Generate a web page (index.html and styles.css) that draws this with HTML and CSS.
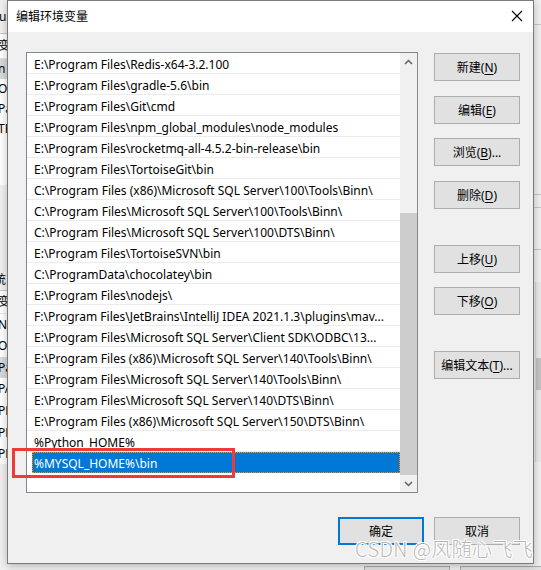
FILE: index.html
```html
<!DOCTYPE html>
<html lang="zh-CN">
  <head>
    <meta charset="utf-8"/>
    <title>编辑环境变量</title>
    <link rel="stylesheet" href="styles.css">
  </head>
  <body>
    <div class="desk">
      <div class="strip-left">
        <div class="ls-head">u</div>
        <div class="ls-list">
          <div class="ls-row ls-hd">变</div>
          <div class="ls-row ls-sel">n</div>
          <div class="ls-row">O</div>
          <div class="ls-row">Pa</div>
          <div class="ls-row">TE</div>
        </div>
        <div class="ls-gap">统</div>
        <div class="ls-list ls-list2">
          <div class="ls-row ls-hd">变</div>
          <div class="ls-row">N</div>
          <div class="ls-row">O</div>
          <div class="ls-row ls-sel">Pa</div>
          <div class="ls-row">PA</div>
          <div class="ls-row">PR</div>
          <div class="ls-row">PR</div>
          <div class="ls-row">PR</div>
        </div>
      </div>
      <div class="desk-mid"></div>
      <div class="strip-right">
        <div class="rs-line rs-a"></div>
        <div class="rs-line rs-b"></div>
        <div class="rs-line rs-c"></div>
        <div class="rs-line rs-d"></div>
        <div class="rs-scroll"><div class="rs-thumb"></div></div>
      </div>
      <div class="desk-bottom">
        <div class="desk-btn"></div>
        <div class="desk-btn desk-btn2"></div>
      </div>
    </div>

    <div class="dialog">
      <div class="titlebar">
        <span class="title">编辑环境变量</span>
        <svg class="close" width="12" height="12" viewBox="0 0 12 12">
          <path d="M1 1 L11 11 M11 1 L1 11" stroke="#000" stroke-width="1.1" fill="none"/>
        </svg>
      </div>
      <div class="body">
        <div class="main">
          <div class="listbox">
            <div class="rows">
              <div class="row"><span class="txt">E:\Program Files\Redis-x64-3.2.100</span></div>
              <div class="row"><span class="txt">E:\Program Files\gradle-5.6\bin</span></div>
              <div class="row"><span class="txt">E:\Program Files\Git\cmd</span></div>
              <div class="row"><span class="txt">E:\Program Files\npm_global_modules\node_modules</span></div>
              <div class="row"><span class="txt">E:\Program Files\rocketmq-all-4.5.2-bin-release\bin</span></div>
              <div class="row"><span class="txt">E:\Program Files\TortoiseGit\bin</span></div>
              <div class="row"><span class="txt">C:\Program Files (x86)\Microsoft SQL Server\100\Tools\Binn\</span></div>
              <div class="row"><span class="txt">C:\Program Files\Microsoft SQL Server\100\Tools\Binn\</span></div>
              <div class="row"><span class="txt">C:\Program Files\Microsoft SQL Server\100\DTS\Binn\</span></div>
              <div class="row"><span class="txt">E:\Program Files\TortoiseSVN\bin</span></div>
              <div class="row"><span class="txt">C:\ProgramData\chocolatey\bin</span></div>
              <div class="row"><span class="txt">E:\Program Files\nodejs\</span></div>
              <div class="row"><span class="txt">F:\Program Files\JetBrains\IntelliJ IDEA 2021.1.3\plugins\mav...</span></div>
              <div class="row"><span class="txt">E:\Program Files\Microsoft SQL Server\Client SDK\ODBC\13...</span></div>
              <div class="row"><span class="txt">E:\Program Files (x86)\Microsoft SQL Server\140\Tools\Binn\</span></div>
              <div class="row"><span class="txt">E:\Program Files\Microsoft SQL Server\140\Tools\Binn\</span></div>
              <div class="row"><span class="txt">E:\Program Files\Microsoft SQL Server\140\DTS\Binn\</span></div>
              <div class="row"><span class="txt">E:\Program Files (x86)\Microsoft SQL Server\150\DTS\Binn\</span></div>
              <div class="row"><span class="txt">%Python_HOME%</span></div>
              <div class="row selected"><span class="txt">%MYSQL_HOME%\bin</span></div>
            </div>
            <div class="scrollbar">
              <div class="sb-btn">
                <svg width="9" height="6" viewBox="0 0 9 6"><path d="M1 5 L4.5 1.5 L8 5" stroke="#606060" stroke-width="1.5" fill="none"/></svg>
              </div>
              <div class="sb-track"><div class="sb-thumb"></div></div>
              <div class="sb-btn">
                <svg width="9" height="6" viewBox="0 0 9 6"><path d="M1 1 L4.5 4.5 L8 1" stroke="#606060" stroke-width="1.5" fill="none"/></svg>
              </div>
            </div>
          </div>
          <div class="side">
            <button class="btn">新建(<u>N</u>)</button>
            <button class="btn nudge">编辑(<u>E</u>)</button>
            <button class="btn">浏览(<u>B</u>)...</button>
            <button class="btn nudge">删除(<u>D</u>)</button>
            <button class="btn gap">上移(<u>U</u>)</button>
            <button class="btn">下移(<u>O</u>)</button>
            <button class="btn gap">编辑文本(<u>T</u>)...</button>
          </div>
        </div>
        <div class="footer">
          <button class="btn default">确定</button>
          <button class="btn">取消</button>
        </div>
      </div>
    </div>

    <div class="mark"></div>
    <div class="watermark">CSDN @风随心飞飞</div>
  </body>
</html>
```

FILE: styles.css
```css
body {
  margin: 0;
  width: 541px;
  height: 570px;
  overflow: hidden;
  position: relative;
  background: #f0f0f0;
  font-family: "Noto Sans", "Noto Sans CJK SC", sans-serif;
  font-size: 12px;
  color: #000;
}

/* window underneath */
.desk {
  display: grid;
  grid-template-columns: 7px 1fr 8px;
  grid-template-rows: 564px 6px;
  height: 570px;
}
.strip-left {
  overflow: hidden;
  background: #f0f0f0;
  white-space: nowrap;
}
.ls-head {
  height: 33px;
  line-height: 33px;
  border-bottom: 1px solid #c8c8c8;
  text-indent: -1px;
}
.ls-list {
  background: #fff;
  height: 151px;
}
.ls-list2 {
  height: 173px;
}
.ls-row {
  height: 20px;
  line-height: 20px;
  text-indent: -2px;
}
.ls-list2 .ls-row {
  height: 21.6px;
  line-height: 21.6px;
}
.ls-hd {
  height: 24px;
  line-height: 24px;
  border-bottom: 1px solid #e5e5e5;
}
.ls-sel {
  background: #d9d9d9;
}
.ls-gap {
  height: 105px;
  line-height: 190px;
  border-bottom: 1px solid #c8c8c8;
  text-indent: -6px;
}
.desk-mid {
  background: #f0f0f0;
}
.strip-right {
  background: #f0f0f0;
  position: relative;
}
.rs-line {
  height: 1px;
  background: #c8c8c8;
  margin-top: 24px;
}
.rs-b {
  margin-top: 169px;
}
.rs-c {
  margin-top: 12px;
}
.rs-d {
  margin-top: 41px;
}
.rs-scroll {
  margin: 32px 0 0 2px;
  height: 180px;
  background: #e8e8e8;
  border-left: 1px solid #d6d6d6;
}
.rs-thumb {
  position: relative;
  top: 76px;
  height: 32px;
  background: #c2c2c2;
}
.desk-bottom {
  grid-column: 1 / 4;
  display: flex;
  justify-content: flex-end;
  gap: 10px;
  background: #f0f0f0;
}
.desk-btn {
  width: 84px;
  margin-top: 2px;
  border: 1px solid #adadad;
  border-bottom: none;
  background: #e1e1e1;
}
.desk-btn2 {
  width: 80px;
  border-right: none;
}

/* dialog */
.dialog {
  position: absolute;
  left: 7px;
  top: 0;
  width: 525px;
  height: 562px;
  border: 1px solid #7a7a7a;
  background: #f0f0f0;
  box-shadow: 0 2px 8px rgba(0, 0, 0, 0.25);
  display: flex;
  flex-direction: column;
}
.titlebar {
  height: 31px;
  background: #fff;
  display: flex;
  align-items: center;
  justify-content: space-between;
  padding: 0 10px 0 8px;
}
.title {
  font-size: 12px;
  padding-bottom: 2px;
}
.close {
  margin-bottom: 1px;
}
.body {
  flex: 1;
  padding: 20px 13px 0 18px;
}
.main {
  display: flex;
  gap: 16px;
}
.listbox {
  width: 390px;
  height: 439px;
  border: 1px solid #828790;
  background: #fff;
  display: flex;
}
.rows {
  flex: 1;
  overflow: hidden;
}
.row {
  height: 20px;
  border-bottom: 1px solid #ececec;
  white-space: nowrap;
  display: flex;
}
.txt {
  flex: 1;
  margin-left: 5px;
  padding: 3px 0 0 2px;
  line-height: 17px;
}
.selected .txt {
  background: #0078d7;
  color: #fff;
  outline: 1px dotted #e0a040;
  outline-offset: -1px;
}
.selected {
  height: 21px;
  border-bottom: none;
}
.scrollbar {
  width: 17px;
  background: #f0f0f0;
  display: flex;
  flex-direction: column;
}
.sb-btn {
  height: 17px;
  display: flex;
  align-items: center;
  justify-content: center;
}
.sb-track {
  flex: 1;
  display: flex;
  flex-direction: column;
  justify-content: flex-end;
}
.sb-thumb {
  height: 262px;
  background: #cdcdcd;
}
.side {
  display: flex;
  flex-direction: column;
  gap: 14px;
  padding-top: 1px;
}
.btn {
  width: 86px;
  height: 28px;
  padding: 0;
  border: 1px solid #adadad;
  background: #e1e1e1;
  font-family: "Noto Sans", "Noto Sans CJK SC", sans-serif;
  font-size: 12px;
  color: #000;
}
.btn u {
  text-underline-offset: 2px;
}
.side .nudge {
  margin-top: 1px;
}
.side .gap {
  margin-top: 22px;
}
.footer {
  display: flex;
  justify-content: flex-end;
  gap: 10px;
  margin-top: 24px;
}
.default {
  border: 2px solid #0078d7;
}

/* annotations */
.mark {
  position: absolute;
  left: 12px;
  top: 448px;
  width: 217px;
  height: 24px;
  border: 3px solid #f03a3a;
}
.watermark {
  position: absolute;
  left: 355px;
  top: 534px;
  font-family: "Noto Sans CJK SC", sans-serif;
  font-weight: 300;
  font-size: 20px;
  letter-spacing: 0.4px;
  color: rgba(160, 160, 160, 0.75);
  text-shadow: 1px 1px 0 #fff, -1px -1px 0 #fff, 1px -1px 0 #fff, -1px 1px 0 #fff;
  white-space: nowrap;
}
```
